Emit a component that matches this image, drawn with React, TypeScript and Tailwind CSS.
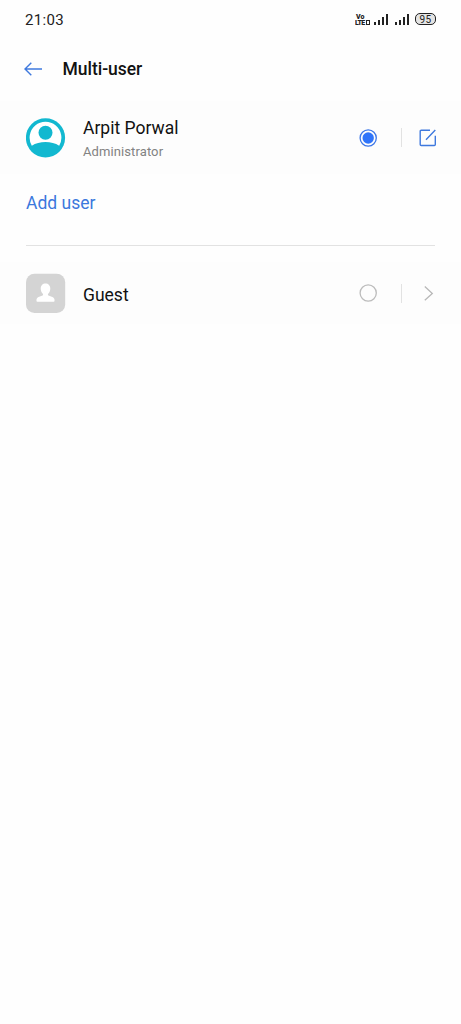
import type { ReactNode } from 'react';

function SignalBars() {
  return (
    <svg width="15" height="11" viewBox="0 0 15 11" fill="#222">
      <rect x="0" y="8" width="2" height="3" />
      <rect x="4" y="6" width="2" height="5" />
      <rect x="8" y="3" width="2" height="8" />
      <rect x="12" y="0" width="2" height="11" />
    </svg>
  );
}

function StatusBar() {
  return (
    <div className="flex h-[38px] items-center justify-between pl-[25px] pr-[25px]">
      <span className="pt-0.5 text-[15px] leading-none tracking-[0.35px] text-[#222]">21:03</span>
      <div className="flex items-center">
        <div className="flex w-[19px] flex-col pt-px text-[7px] font-black leading-[6px] text-[#222]">
          <span className="block h-[6px] overflow-hidden pl-px">Vo</span>
          <span className="flex h-[6px] items-center overflow-hidden tracking-[-0.6px]">
            LTE
            <span className="ml-px h-[5px] w-[4px] border border-[#222]" />
          </span>
        </div>
        <SignalBars />
        <div className="w-[6px]" />
        <SignalBars />
        <div className="ml-[5px] flex h-[12px] w-[21px] items-center justify-center rounded-[5px] border-[1.5px] border-[#222] bg-[#e4e4e4] pt-px text-[10px] leading-none tracking-[0.4px] text-[#222]">
          95
        </div>
      </div>
    </div>
  );
}

function AdminAvatar() {
  return (
    <svg width="40" height="40" viewBox="0 0 40 40">
      <circle cx="19.5" cy="19.8" r="19.6" fill="#12b8d0" />
      <path d="M5.8 27.8A15.9 15.9 0 1 1 33.2 27.8C29.5 25.2 24.5 24 19.5 24S9.5 25.2 5.8 27.8Z" fill="#fff" />
      <circle cx="19.5" cy="14.8" r="7" fill="#12b8d0" />
    </svg>
  );
}

function GuestAvatar() {
  return (
    <svg width="40" height="40" viewBox="0 0 40 40">
      <rect x="0" y="0.8" width="39.2" height="39.2" rx="8.5" fill="#d4d4d4" />
      <path
        d="M19.5 10.5c-2.9 0-4.8 2.1-4.8 5 0 2.2.8 4 2.1 5.2.5.5.4 1.4-.3 1.7l-3.9 1.5c-1.3.6-2.1 1.5-2.1 2.9v1.1c0 .5.3.8.8.8h16.4c.5 0 .8-.3.8-.8v-1.1c0-1.4-.8-2.3-2.1-2.9L22.5 22.4c-.7-.3-.8-1.2-.3-1.7 1.3-1.2 2.1-3 2.1-5.2 0-2.9-1.9-5-4.8-5Z"
        fill="#fff"
      />
    </svg>
  );
}

function Radio({ checked }: { checked?: boolean }) {
  return (
    <svg width="18" height="18" viewBox="0 0 18 18">
      <circle cx="9.2" cy="9" r="8.1" fill="none" stroke={checked ? '#3b76e8' : '#bcbcbc'} strokeWidth="1.3" />
      {checked && <circle cx="9.2" cy="9" r="5.7" fill="#2f74fa" />}
    </svg>
  );
}

function EditIcon() {
  return (
    <svg width="18" height="18" viewBox="0 0 18 18" fill="none" stroke="#3f79de" strokeWidth="1.4">
      <path d="M11 1.2H2.2Q1.2 1.2 1.2 2.2V15.5Q1.2 16.5 2.2 16.5H15.3Q16.3 16.5 16.3 15.5V6.7M7 10.7L16.3 1.1" />
    </svg>
  );
}

function ChevronIcon() {
  return (
    <svg width="18" height="18" viewBox="0 0 18 18" fill="none" stroke="#b8b8b8" strokeWidth="1.3">
      <path d="M5.8 2.5L13.3 9.4L5.8 16.2" />
    </svg>
  );
}

type UserRowProps = {
  avatar: ReactNode;
  name: string;
  role?: string;
  checked?: boolean;
  action: ReactNode;
  className: string;
};

function UserRow({ avatar, name, role, checked, action, className }: UserRowProps) {
  return (
    <div className={`flex items-center bg-[#fdfdfd] pl-[26px] pr-6 ${className}`}>
      {avatar}
      <div className={`ml-[17px] flex-1 ${role ? 'pt-1' : 'pt-[3px]'}`}>
        <div className="text-[17.5px] leading-6 text-[#111]">{name}</div>
        {role && <div className="text-[13px] leading-6 tracking-[0.1px] text-[#828282]">{role}</div>}
      </div>
      <Radio checked={checked} />
      <div className="ml-6 h-[19px] w-px bg-[#e2e2e2]" />
      <div className="ml-[17px]">{action}</div>
    </div>
  );
}

export default function App() {
  return (
    <div className="min-h-screen bg-[#fefefe] font-['Roboto',sans-serif]">
      <StatusBar />
      <header className="flex h-[63px] items-center pb-0.5 pl-6">
        <svg width="18" height="14" viewBox="0 0 18 14" fill="none" stroke="#3f79de" strokeWidth="1.4">
          <path d="M7.3.7L1 7l6.3 6.3M1 7h17" />
        </svg>
        <h1 className="ml-[20.5px] text-[17.5px] font-medium leading-6 tracking-[-0.03px] text-[#111]">Multi-user</h1>
      </header>
      <UserRow
        avatar={<AdminAvatar />}
        name="Arpit Porwal"
        role="Administrator"
        checked
        action={<EditIcon />}
        className="h-[73px]"
      />
      <div className="mx-[26px] h-[72px] border-b border-[#e2e2e2] pt-[17px]">
        <button className="block text-[17.5px] leading-6 text-[#3b78dd]">Add user</button>
      </div>
      <UserRow
        avatar={<GuestAvatar />}
        name="Guest"
        action={<ChevronIcon />}
        className="mt-4 h-[62px]"
      />
    </div>
  );
}
